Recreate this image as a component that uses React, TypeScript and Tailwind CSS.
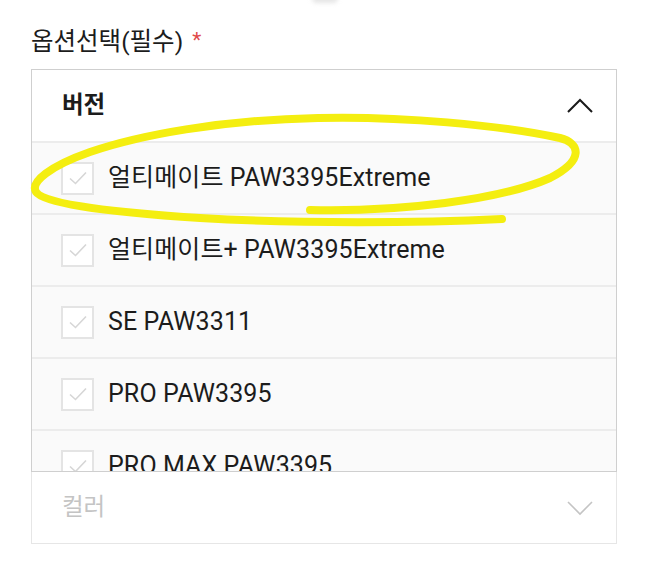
import React from 'react';

const options = [
  '얼티메이트 PAW3395Extreme',
  '얼티메이트+ PAW3395Extreme',
  'SE PAW3311',
  'PRO PAW3395',
  'PRO MAX PAW3395',
];

function Checkbox() {
  return (
    <div className="w-[33px] h-[33px] shrink-0 border-2 border-[#e4e4e4] bg-white flex items-center justify-center">
      <svg width="20" height="16" viewBox="0 0 20 16" fill="none">
        <path d="M2 8.5 L7.5 13.5 L18 2.5" stroke="#d6d6d6" strokeWidth="1.6" />
      </svg>
    </div>
  );
}

export default function App() {
  return (
    <div
      className="relative w-[648px] h-[564px] overflow-hidden bg-white text-[#1c1c1c]"
      style={{ fontFamily: 'Roboto, "Noto Sans CJK KR", sans-serif' }}
    >
      {/* 상단 잘린 그림자 */}
      <div className="absolute left-[312px] top-[-6px] w-[26px] h-[9px] rounded-full bg-[#e6e6e6] blur-[2px]" />

      <div className="pt-[22px] pl-[31px] flex items-center h-[62px] text-[24.5px] leading-[30px]">
        <span>옵션선택(필수)</span>
        <span className="ml-[9px] text-[#e04a4a] text-[21px] mt-[-4px]">*</span>
      </div>

      <div className="mt-[7px] mx-[31px] border border-[#cfcfcf] h-[403px] overflow-hidden">
        <div className="h-[71px] bg-white flex items-center justify-between pl-[30px] pr-[23px]">
          <span className="text-[23.5px] font-bold">버전</span>
          <svg width="26" height="16" viewBox="0 0 26 16" fill="none">
            <path d="M1 14 L13 2 L25 14" stroke="#1a1a1a" strokeWidth="2" />
          </svg>
        </div>
        {options.map((o) => (
          <div
            key={o}
            className="h-[72px] bg-[#fafafa] border-t-2 border-[#ececec] flex items-center pl-[29px] gap-[14px] shrink-0"
          >
            <Checkbox />
            <span className="text-[25px] tracking-[0.1px]">{o}</span>
          </div>
        ))}
      </div>

      <div className="mx-[31px] h-[72px] border-x border-b border-[#e6e6e6] flex items-center justify-between pl-[30px] pr-[23px]">
        <span className="text-[23.5px] text-[#c4c4c4]">컬러</span>
        <svg width="26" height="16" viewBox="0 0 26 16" fill="none">
          <path d="M1 2 L13 14 L25 2" stroke="#c4c4c4" strokeWidth="1.6" />
        </svg>
      </div>

      {/* 형광펜 표시 */}
      <svg className="absolute left-0 top-0 pointer-events-none" width="648" height="564" viewBox="0 0 648 564" fill="none">
        <path
          d="M310 210 C 400 212, 500 200, 550 178 C 585 160, 580 143, 560 138 C 500 125, 400 116, 318 118 C 220 120, 140 135, 90 152 C 50 166, 30 182, 36 192 C 45 205, 120 213, 200 218 C 300 224, 420 223, 502 219"
          stroke="#f4ee10"
          strokeWidth="8"
          strokeLinecap="round"
          strokeLinejoin="round"
        />
      </svg>
    </div>
  );
}
